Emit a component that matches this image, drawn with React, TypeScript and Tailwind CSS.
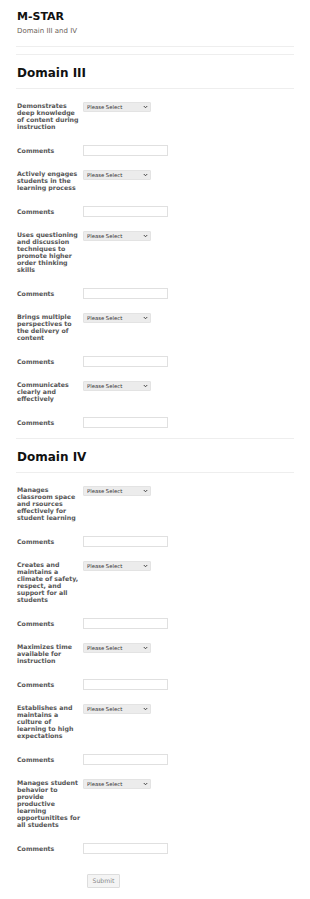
import React from 'react';

const domainThree = [
  'Demonstrates deep knowledge of content during instruction',
  'Actively engages students in the learning process',
  'Uses questioning and discussion techniques to promote higher order thinking skills',
  'Brings multiple perspectives to the delivery of content',
  'Communicates clearly and effectively',
];

const domainFour = [
  'Manages classroom space and rsources effectively for student learning',
  'Creates and maintains a climate of safety, respect, and support for all students',
  'Maximizes time available for instruction',
  'Establishes and maintains a culture of learning to high expectations',
  'Manages student behavior to provide productive learning opportunitites for all students',
];

function SelectBox() {
  return (
    <div className="relative w-[68px] h-[10px] shrink-0">
      <select
        defaultValue=""
        className="block appearance-none w-full h-full bg-[#ececec] border border-[#e3e3e3] rounded-[1px] pl-[3px] py-0 text-[5.3px] leading-[8px] text-[#333] outline-none"
      >
        <option value="">Please Select</option>
      </select>
      <svg className="absolute right-[3px] top-[3px] w-[5px] h-[4px] pointer-events-none" viewBox="0 0 10 8">
        <path d="M1.5 2 L5 5.5 L8.5 2" fill="none" stroke="#333" strokeWidth="1.8" />
      </svg>
    </div>
  );
}

function Question({ label }: { label: string }) {
  return (
    <div className="pl-[1px] pt-[7px] pb-[8px]">
      <div className="flex">
        <label className="w-[66px] shrink-0 pr-[1px] text-[6.25px] leading-[7px] font-bold text-[#555]">{label}</label>
        <SelectBox />
      </div>
      <div className="flex items-center mt-[15px] mb-[-1px]">
        <label className="w-[66px] shrink-0 text-[6.25px] leading-[7px] font-bold text-[#555]">Comments</label>
        <input type="text" className="block w-[85px] h-[11px] bg-white border border-[#e0e0e0] outline-none" />
      </div>
    </div>
  );
}

function Section({ title, items }: { title: string; items: string[] }) {
  return (
    <section>
      <div className="border-t border-[#eeeeee] pl-[1px] pt-[10px] pb-[7px]">
        <h2 className="text-[12px] leading-[16px] font-bold text-[#111]">{title}</h2>
      </div>
      <div className="border-t border-[#eeeeee] pt-[6px] pb-[3px]">
        {items.map((q) => (
          <Question key={q} label={q} />
        ))}
      </div>
    </section>
  );
}

export default function App() {
  return (
    <div className="min-h-screen bg-white px-[16px] pt-[10px] pb-[10px] [font-family:'DejaVu_Sans',sans-serif]">
      <header className="pl-[1px] pb-[11px] border-b border-[#eeeeee]">
        <h1 className="text-[11px] leading-[14px] font-bold text-[#111]">M-STAR</h1>
        <p className="mt-[3px] text-[7px] leading-[8px] text-[#6b6259]">Domain III and IV</p>
      </header>
      <div className="h-[7px]" />
      <Section title="Domain III" items={domainThree} />
      <Section title="Domain IV" items={domainFour} />
      <div className="pl-[71px] pt-[10px]">
        <button className="block w-[33px] h-[14px] bg-[#f4f4f4] border border-[#dddddd] rounded-[1px] text-[6.2px] leading-[12px] text-[#888]">
          Submit
        </button>
      </div>
    </div>
  );
}
